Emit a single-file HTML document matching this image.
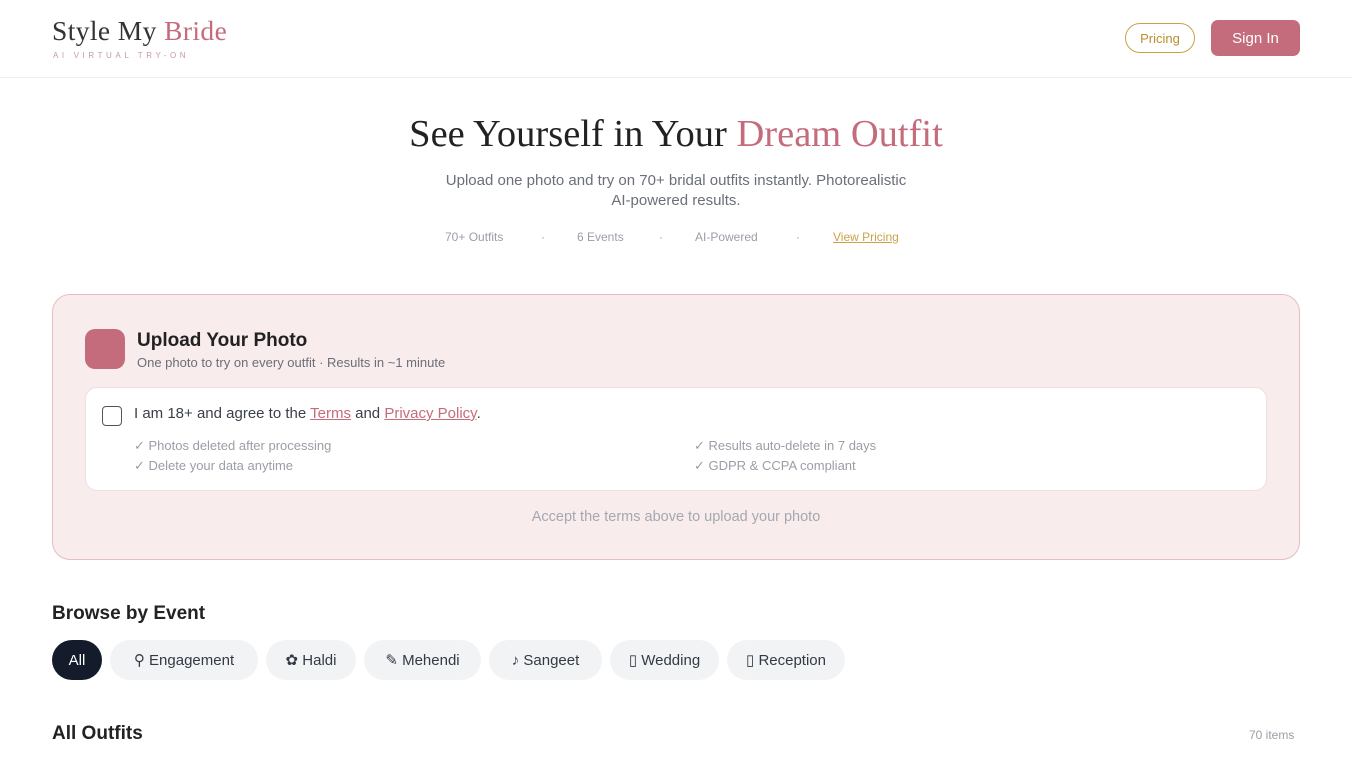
<!DOCTYPE html>
<html><head><meta charset="utf-8"><style>
*{margin:0;padding:0;box-sizing:border-box}
body{width:1352px;height:760px;overflow:hidden;background:#fff;font-family:"Liberation Sans",sans-serif;color:#1f2430;position:relative}
.abs{position:absolute}
header{position:absolute;left:0;top:0;width:1352px;height:78px;border-bottom:1px solid #f0eeee}
.serif{font-family:"Liberation Serif",serif}
.pink{color:#c46c7c}
.chip{position:absolute;top:640px;height:40px;border-radius:20px;background:#f2f3f5;font-size:15px;color:#333a46;display:flex;align-items:center;justify-content:center}
.sm{font-size:12px;color:#9a9ea6}
</style></head><body>
<header>
<div class="abs serif" style="left:52px;top:15px;font-size:27.5px;letter-spacing:0.4px;color:#333">Style My <span class="pink">Bride</span></div>
<div class="abs" style="left:53px;top:51px;font-size:8px;letter-spacing:3.6px;color:#c69aa2">AI VIRTUAL TRY-ON</div>
<div class="abs" style="left:1125px;top:23px;width:70px;height:30px;border:1px solid #c9a24a;border-radius:15px;color:#b8902e;font-size:13px;display:flex;align-items:center;justify-content:center">Pricing</div>
<div class="abs" style="left:1211px;top:20px;width:89px;height:36px;background:#c46c7c;border-radius:7px;color:#fff;font-size:15px;display:flex;align-items:center;justify-content:center">Sign In</div>
</header>
<div class="abs serif" style="left:0;width:1352px;top:112px;text-align:center;font-size:38.5px;color:#222">See Yourself in Your <span class="pink">Dream Outfit</span></div>
<div class="abs" style="left:0;width:1352px;top:171px;text-align:center;font-size:15px;line-height:20px;color:#6a6f78">Upload one photo and try on 70+ bridal outfits instantly. Photorealistic<br>AI-powered results.</div>
<div class="abs sm" style="left:445px;top:230px">70+ Outfits</div>
<div class="abs sm" style="left:541px;top:230px">·</div>
<div class="abs sm" style="left:577px;top:230px">6 Events</div>
<div class="abs sm" style="left:659px;top:230px">·</div>
<div class="abs sm" style="left:695px;top:230px">AI-Powered</div>
<div class="abs sm" style="left:796px;top:230px">·</div>
<div class="abs sm" style="left:833px;top:230px;color:#c9a24a;text-decoration:underline">View Pricing</div>
<div class="abs" style="left:52px;top:294px;width:1248px;height:266px;background:#f8eced;border:1px solid #e8bcc4;border-radius:18px"></div>
<div class="abs" style="left:85px;top:329px;width:40px;height:40px;background:#c46c7c;border-radius:10px"></div>
<div class="abs" style="left:137px;top:330px;font-size:19px;font-weight:bold;color:#222">Upload Your Photo</div>
<div class="abs" style="left:137px;top:355px;font-size:13px;color:#6a6f78">One photo to try on every outfit · Results in ~1 minute</div>
<div class="abs" style="left:85px;top:387px;width:1182px;height:104px;background:#fff;border:1px solid #eee0e2;border-radius:12px"></div>
<div class="abs" style="left:102px;top:406px;width:20px;height:20px;border:1.5px solid #555;border-radius:4px"></div>
<div class="abs" style="left:134px;top:405px;font-size:15px;color:#3a3f48">I am 18+ and agree to the <span class="pink" style="text-decoration:underline">Terms</span> and <span class="pink" style="text-decoration:underline">Privacy Policy</span>.</div>
<div class="abs sm" style="left:134px;top:438px;font-size:13px">✓ Photos deleted after processing</div>
<div class="abs sm" style="left:134px;top:458px;font-size:13px">✓ Delete your data anytime</div>
<div class="abs sm" style="left:694px;top:438px;font-size:13px">✓ Results auto-delete in 7 days</div>
<div class="abs sm" style="left:694px;top:458px;font-size:13px">✓ GDPR &amp; CCPA compliant</div>
<div class="abs" style="left:0;width:1352px;top:509px;text-align:center;font-size:14.5px;color:#a4a8b0">Accept the terms above to upload your photo</div>
<div class="abs" style="left:52px;top:603px;font-size:19px;font-weight:bold;color:#222">Browse by Event</div>
<div class="chip" style="left:52px;width:50px;background:#141b2b;color:#fff">All</div>
<div class="chip" style="left:110px;width:148px">⚲ Engagement</div>
<div class="chip" style="left:266px;width:90px">✿ Haldi</div>
<div class="chip" style="left:364px;width:117px">✎ Mehendi</div>
<div class="chip" style="left:489px;width:113px">♪ Sangeet</div>
<div class="chip" style="left:610px;width:109px">▯ Wedding</div>
<div class="chip" style="left:727px;width:118px">▯ Reception</div>
<div class="abs" style="left:52px;top:723px;font-size:19px;font-weight:bold;color:#222">All Outfits</div>
<div class="abs sm" style="left:1249px;top:728px">70 items</div>
</body></html>
